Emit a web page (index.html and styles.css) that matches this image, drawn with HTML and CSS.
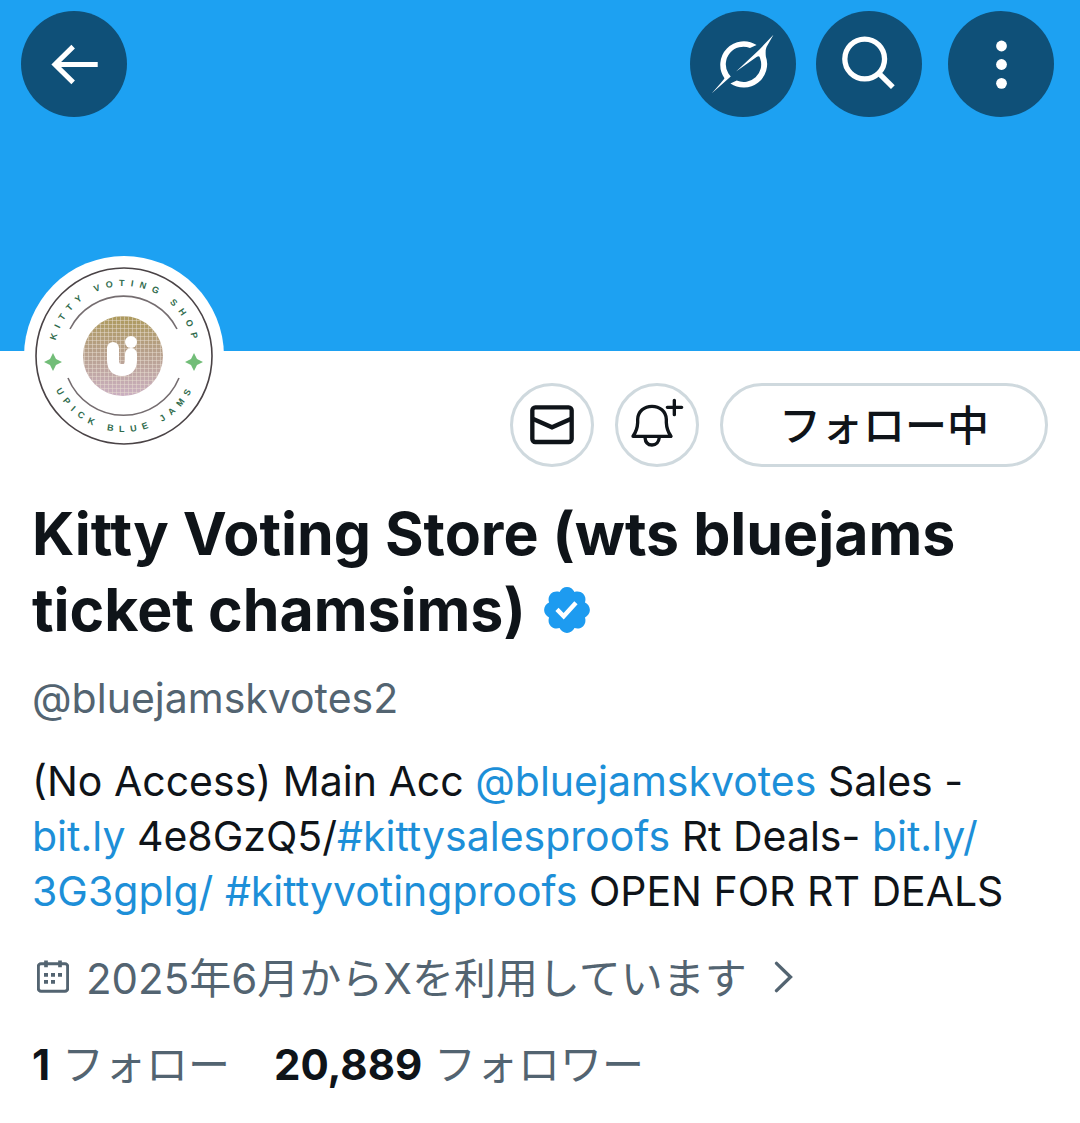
FILE: index.html
```html
<!DOCTYPE html>
<html lang="ja">
<head>
<meta charset="utf-8">
<meta name="viewport" content="width=device-width, initial-scale=1">
<title>Kitty Voting Store</title>
<link rel="stylesheet" href="styles.css">
</head>
<body>
<header class="banner">
  <button class="round" type="button" aria-label="戻る">
    <svg viewBox="63 34 315 315" fill="none" stroke="#fff" stroke-width="15"><path d="M291 193H166M218 140L164 193L218 246"/></svg>
  </button>
  <div class="banner-tools">
    <button class="round" type="button" aria-label="Grok">
      <svg viewBox="29 31 320 320" fill="#fff"><path d="M230 134A71 71 0 0 0 133 234Q130 240 95 279L152 229L145 220A53 53 0 0 1 210 143ZM168 214L238 148L281 103L260 140Q256 150 258 168A71 71 0 0 1 151 250L170 241A53 53 0 0 0 241 175Q239 164 230 170Z"/></svg>
    </button>
    <button class="round" type="button" aria-label="検索">
      <svg viewBox="408 31 320 320" fill="none" stroke="#fff" stroke-width="16"><circle cx="555" cy="176" r="60"/><path d="M598 219L640 261"/></svg>
    </button>
    <button class="round more" type="button" aria-label="その他">
      <svg viewBox="805 34 315 315" fill="#fff"><circle cx="964" cy="138" r="16"/><circle cx="964" cy="193" r="16"/><circle cx="964" cy="249" r="16"/></svg>
    </button>
  </div>
</header>
<main class="profile">
  <div class="top-row">
    <svg class="avatar" viewBox="0 0 200 200" role="img" aria-label="Kitty Voting Shop">
      <defs>
        <linearGradient id="tone" x1="0" y1="0" x2="0" y2="1"><stop offset="0" stop-color="#ad9a5c"/><stop offset=".45" stop-color="#b7a08b"/><stop offset="1" stop-color="#cbb0c2"/></linearGradient>
        <pattern id="weave" width="4" height="4" patternUnits="userSpaceOnUse"><path d="M0 0H4M0 0V4" stroke="#e6dcd0" stroke-width="1"/></pattern>
        <path id="top-arc" d="M30 100A70 70 0 0 1 170 100"/>
        <path id="bottom-arc" d="M24 100A76 76 0 0 0 176 100"/>
      </defs>
      <circle cx="100" cy="100" r="100" fill="#fff"/>
      <circle cx="100" cy="100" r="88" fill="none" stroke="#4a4346" stroke-width="1.6"/>
      <path d="M46 73A60 60 0 0 1 153 73M44 122A60 60 0 0 0 155 122" fill="none" stroke="#756d70" stroke-width="1.6"/>
      <circle cx="99" cy="100" r="40" fill="url(#tone)"/>
      <circle cx="99" cy="100" r="40" fill="url(#weave)"/>
      <path d="M89 92V104Q89 114 98 114Q107 114 107 104V98" fill="none" stroke="#fff" stroke-width="12" stroke-linecap="round"/>
      <circle cx="107" cy="86" r="6" fill="#fff"/>
      <g fill="#72bd78"><path id="star" d="M29 97L32 103L38 106L32 109L29 115L26 109L20 106L26 103Z"/><use href="#star" x="141"/></g>
      <text class="seal"><textPath href="#top-arc" startOffset="51%">KITTY VOTING SHOP</textPath></text>
      <text class="seal"><textPath href="#bottom-arc" startOffset="51%">UPICK BLUE JAMS</textPath></text>
    </svg>
    <div class="actions">
      <button class="outline icon" type="button" aria-label="メッセージ">
        <svg viewBox="30 39 252 252" fill="none" stroke="#0f1419" stroke-width="13"><rect x="97" y="112" width="118" height="104" rx="9"/><path d="M98 146L156 172L214 146"/></svg>
      </button>
      <button class="outline icon" type="button" aria-label="通知">
        <svg viewBox="345 39 252 252" fill="none" stroke="#0f1419" stroke-width="10" stroke-linejoin="round"><path d="M399 199Q412 181 413 158V148C414 124 433 109 456 109S498 124 499 148V158Q500 181 513 199ZM435 202C436 218 444 225 456 225S476 218 478 202"/><path d="M523 91V134M502 112H545" stroke-linecap="round"/></svg>
      </button>
      <button class="outline following" type="button">フォロー中</button>
    </div>
  </div>
  <h1 class="name">Kitty Voting Store (wts bluejams<br>ticket chamsims)
    <svg class="verified" viewBox="1.7 1.7 20.6 20.6" role="img" aria-label="認証済み"><path fill="#1d9bf0" d="M22.25 12c0-1.43-.88-2.67-2.19-3.34.46-1.39.2-2.9-.81-3.91s-2.52-1.27-3.91-.81c-.66-1.31-1.91-2.19-3.34-2.19s-2.67.88-3.33 2.19c-1.4-.46-2.91-.2-3.92.81s-1.26 2.52-.8 3.91c-1.31.67-2.2 1.91-2.2 3.34s.89 2.67 2.2 3.34c-.46 1.39-.21 2.9.8 3.91s2.52 1.26 3.91.81c.67 1.31 1.91 2.19 3.34 2.19s2.68-.88 3.34-2.19c1.39.45 2.9.2 3.91-.81s1.27-2.52.81-3.91c1.31-.67 2.19-1.91 2.19-3.34zm-11.71 4.2L6.8 12.46l1.41-1.42 2.26 2.26 4.8-5.23 1.47 1.36-6.2 6.77z"/></svg>
  </h1>
  <p class="handle">@bluejamskvotes2</p>
  <p class="bio">(No Access) Main Acc <a href="#">@bluejamskvotes</a> Sales -<br><a href="#">bit.ly</a> 4e8GzQ5/<a href="#">#kittysalesproofs</a> Rt Deals- <a href="#">bit.ly/<br>3G3gplg/</a> <a href="#">#kittyvotingproofs</a> OPEN FOR RT DEALS</p>
  <a class="joined" href="#">
    <svg class="calendar" viewBox="51 59 96 98" fill="none" stroke="#536471" stroke-width="9"><rect x="55" y="70" width="88" height="82" rx="8"/><path d="M78 60V80M120 60V80" stroke-width="11"/><path d="M72 103H84M93 103H105M114 103H126M72 124H84M93 124H105" stroke-width="11"/></svg>
    <span>2025年6月からXを利用しています</span>
    <svg class="chevron" viewBox="516 60 56 96" fill="none" stroke="#536471" stroke-width="10" stroke-linecap="round"><path d="M523 67L565 108L523 149"/></svg>
  </a>
  <nav class="counts">
    <a href="#"><b>1</b> フォロー</a>
    <a href="#"><b>20,889</b> フォロワー</a>
  </nav>
</main>
</body>
</html>
```
FILE: styles.css
```css
* { box-sizing: border-box; }
body {
  margin: 0;
  background: #fff;
  color: #0f1419;
  font-family: Inter, "Noto Sans CJK JP", sans-serif;
  font-size: 41px;
  line-height: 55px;
}
button { padding: 0; font: inherit; color: inherit; cursor: pointer; }
a { color: #1d8fd8; text-decoration: none; }
svg { display: block; }

.banner {
  display: flex;
  justify-content: space-between;
  align-items: flex-start;
  min-height: 351px;
  padding: 11px 26px 0 21px;
  background: #1da1f2;
}
.banner-tools { display: flex; gap: 20px; }
.round {
  width: 106px;
  height: 106px;
  border: 0;
  border-radius: 50%;
  background: #0f5078;
}
.round svg { width: 100%; height: 100%; }
.more { margin-left: 6px; }

.profile { padding: 0 32px 32px; }
.top-row { display: flex; justify-content: space-between; align-items: flex-start; }
.avatar { width: 200px; height: 200px; margin: -95px 0 0 -8px; }
.seal {
  font: bold 9px "Liberation Sans", sans-serif;
  letter-spacing: 6px;
  text-anchor: middle;
  fill: #2f6b4c;
}
.actions { display: flex; gap: 21px; padding-top: 32px; }
.outline {
  height: 84px;
  border: 3px solid #cfd9de;
  border-radius: 42px;
  background: #fff;
}
.icon { width: 84px; }
.icon svg { width: 84px; height: 84px; margin: -3px; }
.following { width: 328px; font-size: 42px; font-weight: 500; }

.name { margin: 29px 0 0; font-size: 59px; line-height: 76px; font-weight: 700; }
.verified { display: inline-block; width: 46px; height: 46px; margin-left: 4px; vertical-align: -2px; }
.handle { margin: 23px 0 28px; color: #536471; }
.bio { margin: 0; }
.joined { display: flex; align-items: center; margin-top: 32px; color: #536471; font-size: 42px; }
.calendar { width: 32px; height: 33px; margin: 0 17px 4px 5px; }
.chevron { width: 19px; height: 32px; margin: 0 0 4px 27px; }
.counts { display: flex; gap: 44px; margin-top: 31px; font-size: 42px; }
.counts a { color: #536471; }
.counts b { color: #0f1419; }
```
